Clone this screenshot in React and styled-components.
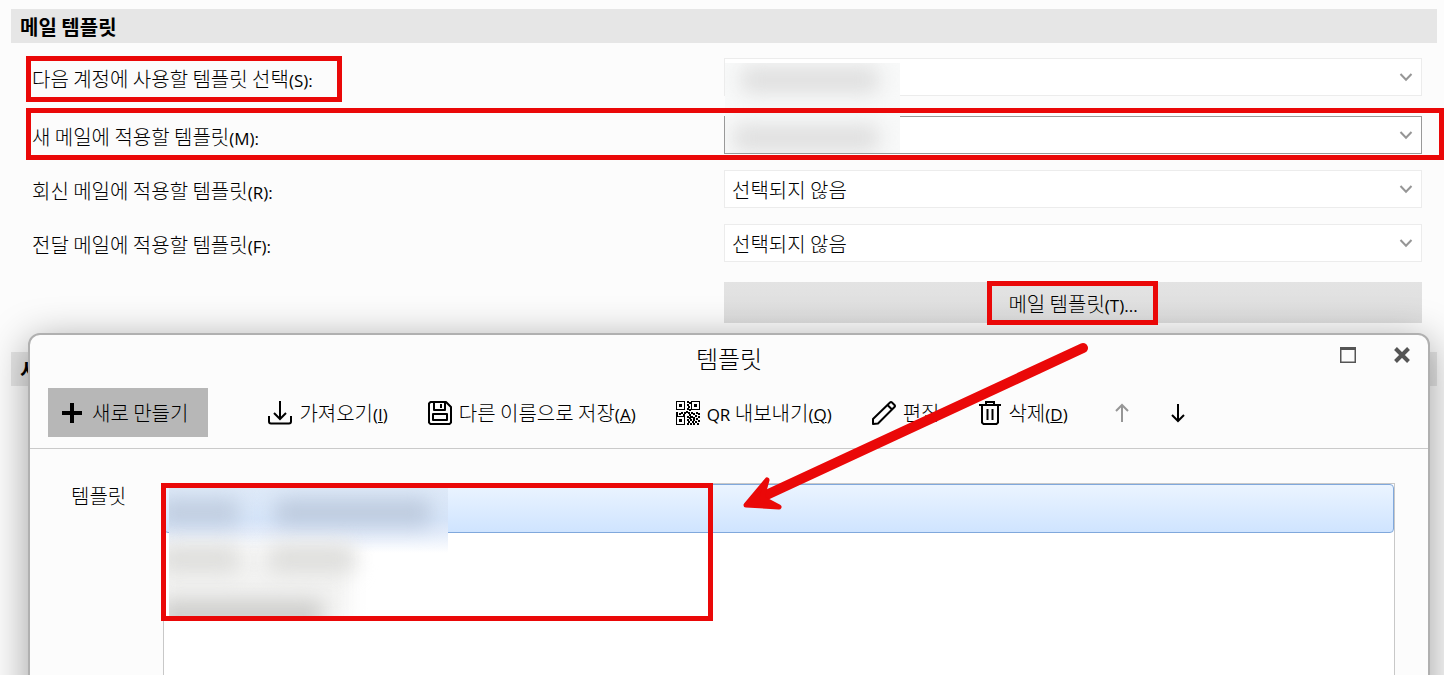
import React from "react";
import styled, { createGlobalStyle, css } from "styled-components";

const RED = "#ea0808";

const GlobalStyle = createGlobalStyle`
  *, *::before, *::after { box-sizing: border-box; }
  body {
    margin: 0;
    background: #fcfcfc;
    color: #000;
    font: 300 20px/24px "Noto Sans CJK KR", sans-serif;
  }
  button, select { font: inherit; color: inherit; }
`;

const Page = styled.main`
  position: relative;
  min-height: 100vh;
  padding: 9px 0 0;
  overflow: hidden;
`;

const SectionTitle = styled.h2`
  margin: 0 7px 0 11px;
  padding: 0 9px;
  height: 34px;
  background: #e6e6e6;
  font-size: 20px;
  font-weight: 700;
  line-height: 36px;
`;

const Settings = styled.div`
  display: flex;
  flex-direction: column;
  gap: 16px;
  padding: 15px 22px 29px 26px;
`;

const Row = styled.div`
  position: relative;
  display: grid;
  grid-template-columns: 1fr 1fr;
  align-items: center;
  margin-top: ${(p) => (p.$spaced ? "4px" : "0")};
`;

const RowLabel = styled.label`
  padding: 3px 0 0 6px;
`;

const Latin = styled.span`
  font-family: "Open Sans", sans-serif;
  font-size: 17px;
  font-weight: 400;
  line-height: 1;
`;

const SelectBox = styled.div`
  position: relative;
  svg {
    position: absolute;
    top: 14px;
    right: 9px;
    pointer-events: none;
  }
`;

const Select = styled.select`
  display: block;
  width: 100%;
  height: 38px;
  padding: 2px 32px 0 7px;
  border: 1px solid ${(p) => (p.$active ? "#999" : "#ececec")};
  border-radius: 0;
  background: #fff;
  appearance: none;
`;

const WideButton = styled.button`
  grid-column: 2;
  height: 41px;
  padding: 2px 0 0;
  border: 0;
  background: linear-gradient(#e3e3e3, #dedede);
`;

const Marked = styled.span`
  position: relative;
  display: inline-block;
`;

/* red annotation frame laid over a control */
const Frame = styled.span`
  position: absolute;
  z-index: ${(p) => (p.$top ? 3 : 2)};
  border: 5px solid ${RED};
  pointer-events: none;
  ${(p) => p.$at}
`;

const labelFrame = css`left: 0; top: -2px; width: 316px; height: 46px;`;
const rowFrame = css`left: 0; right: -22px; top: -8px; height: 52px;`;
const buttonFrame = css`left: -21px; right: -20px; top: -11px; height: 44px;`;
const listFrame = css`left: -3px; top: -1px; width: 552px; height: 138px;`;

const Redaction = styled.span`
  position: absolute;
  overflow: hidden;
  pointer-events: none;
  background: ${(p) => p.$bg || "#f8f9f9"};
  ${(p) => p.$at}
`;

const Smudge = styled.span`
  position: absolute;
  border-radius: 8px;
  filter: blur(10px);
  background: ${(p) => p.$color || "#dedede"};
  ${(p) => p.$at}
`;

const Dialog = styled.section`
  position: absolute;
  z-index: 1;
  top: 333px;
  bottom: -40px;
  left: 28px;
  right: 14px;
  display: flex;
  flex-direction: column;
  border: 2px solid #b0b0b0;
  border-radius: 12px;
  background: #fcfcfc;
  box-shadow: 0 8px 40px rgba(0, 0, 0, 0.38);
`;

const TitleBar = styled.header`
  display: grid;
  grid-template-columns: 1fr auto 1fr;
  align-items: start;
  height: 48px;
  padding: 0 18px;
`;

const DialogTitle = styled.h1`
  grid-column: 2;
  margin: 0;
  font-size: 24px;
  font-weight: 300;
  line-height: 46px;
`;

const WindowButtons = styled.div`
  display: flex;
  justify-content: flex-end;
  align-items: center;
  gap: 38px;
  height: 40px;
`;

const PlainButton = styled.button`
  display: flex;
  align-items: center;
  gap: 7px;
  padding: 0;
  border: 0;
  background: none;
  white-space: nowrap;
  svg { flex: none; }
  &:disabled { color: #969696; }
`;

const NewButton = styled(PlainButton)`
  gap: 10px;
  height: 49px;
  margin-right: 20px;
  padding: 0 20px 0 14px;
  background: #b7b7b7;
`;

const ArrowButtons = styled.div`
  display: flex;
  gap: 40px;
  padding-left: 6px;
`;

const Toolbar = styled.div`
  display: flex;
  align-items: center;
  gap: 40px;
  padding: 5px 18px 11px;
  border-bottom: 1px solid #cacaca;
`;

const Content = styled.div`
  display: grid;
  grid-template-columns: 92px 1fr;
  flex: 1;
  padding: 34px 33px 0 41px;
`;

const ListLabel = styled.span`
  line-height: 26px;
`;

const List = styled.ul`
  position: relative;
  margin: 0;
  padding: 0;
  border: 1px solid #c8c8c8;
  background: #fff;
  list-style: none;
`;

const Item = styled.li`
  height: 49px;
  border: 1px solid transparent;
  border-radius: 4px;
  &[aria-selected="true"] {
    border-color: #80a8dc;
    background: linear-gradient(#ebf4ff, #cfe4ff);
  }
`;

const Arrow = styled.svg`
  position: absolute;
  z-index: 4;
  top: 340px;
  left: calc(50% + 14px);
  pointer-events: none;
`;

const Icon = ({ w = 24, h = 24, children, ...rest }) => (
  <svg width={w} height={h} viewBox={`0 0 ${w} ${h}`} fill="none" stroke="currentColor" strokeWidth="2" aria-hidden="true" {...rest}>
    {children}
  </svg>
);

const Chevron = () => (
  <Icon w={14} h={10} stroke="#969696">
    <path d="M1.5 2 7 7.8 12.5 2" />
  </Icon>
);

const PlusIcon = () => (
  <Icon w={20} h={20} strokeWidth="4">
    <path d="M10 0v20M0 10h20" />
  </Icon>
);

const ImportIcon = () => (
  <Icon>
    <path d="M12 0v17.500M6 12l6 6 6-6M1 15v5.500a2 2 0 0 0 2 2h18a2 2 0 0 0 2-2V15" />
  </Icon>
);

const SaveIcon = () => (
  <Icon>
    <path d="M2.500 1H18l5 5v15.500L21.500 23h-19L1 21.500v-19zM6 1v8h11V1M13 3v4M5 19v-6h14v6z" strokeLinejoin="round" />
  </Icon>
);

const QR_DOTS = [
  [11, 0], [13, 1], [11, 3], [12, 5], [11, 7], [13, 8], [0, 11], [3, 12], [5, 11], [8, 11], [7, 13],
  [10, 10], [12, 11], [15, 11], [17, 12], [20, 11], [22, 12], [0, 13], [13, 13], [14, 15],
  [19, 14], [22, 15], [11, 15], [13, 16], [15, 15], [17, 16], [11, 18], [14, 18], [17, 18], [20, 17],
  [12, 20], [16, 20], [19, 20], [22, 19], [11, 22], [14, 22], [17, 22], [21, 22],
];

const QrIcon = () => (
  <Icon stroke="none" fill="currentColor" shapeRendering="crispEdges">
    {[[0, 0], [15, 0], [0, 15]].map(([x, y]) => (
      <path key={`${x}-${y}`} fillRule="evenodd" d={`M${x} ${y}h9v9h-9zm1 1v7h7v-7zm2 2h3v3h-3z`} />
    ))}
    {QR_DOTS.map(([x, y]) => (
      <rect key={`${x}-${y}`} x={x} y={y} width="2" height="2" />
    ))}
  </Icon>
);

const PencilIcon = () => (
  <Icon>
    <path d="M1 23v-5L18 1.500q1-1 2 0L22.500 4q1 1 0 2L6 22.500zM15.500 4l4.500 4.500" strokeLinejoin="round" />
  </Icon>
);

const TrashIcon = () => (
  <Icon w={22}>
    <path d="M0 4h22M7 4V1h8v3M3 4v17.500L4.500 23h13l1.500-1.500V4M8.500 8v11M13.500 8v11" />
  </Icon>
);

const UpIcon = () => (
  <Icon w={16} h={20}>
    <path d="M8 19V2M2 8l6-6 6 6" />
  </Icon>
);

const DownIcon = () => (
  <Icon w={16} h={20}>
    <path d="M8 1v17M2 12l6 6 6-6" />
  </Icon>
);

const MaximizeIcon = () => (
  <Icon w={16} h={16} stroke="#555" strokeWidth="1.500">
    <path d="M.75 0v15.250h14.500V0" />
    <path d="M0 1.500h16" strokeWidth="3" />
  </Icon>
);

const CloseIcon = () => (
  <Icon w={16} h={16} stroke="#555" strokeWidth="4">
    <path d="m1.500 1.500 13 13M14.500 1.500l-13 13" />
  </Icon>
);

const Accel = ({ k }) => (
  <Latin>(<u>{k}</u>)</Latin>
);

function SelectRow({ id, label, accel, value, active, spaced, frame, smudge }) {
  return (
    <Row $spaced={spaced}>
      <RowLabel htmlFor={id}>{label}<Latin>({accel}):</Latin></RowLabel>
      <SelectBox>
        <Select id={id} $active={active}>
          <option>{value}</option>
        </Select>
        <Chevron />
        {smudge}
      </SelectBox>
      {frame && <Frame $at={frame} />}
    </Row>
  );
}

export default function App() {
  return (
    <Page>
      <GlobalStyle />
      <SectionTitle>메일 템플릿</SectionTitle>
      <Settings>
        <SelectRow
          id="account" label="다음 계정에 사용할 템플릿 선택" accel="S" frame={labelFrame}
          smudge={
            <Redaction $at={css`left: 1px; top: 5px; width: 175px; height: 48px;`}>
              <Smudge $at={css`left: 16px; top: 4px; width: 138px; height: 26px;`} />
            </Redaction>
          }
        />
        <SelectRow
          id="new-mail" label="새 메일에 적용할 템플릿" accel="M" active spaced frame={rowFrame}
          smudge={
            <Redaction $at={css`left: 1px; top: -3px; width: 175px; height: 40px;`}>
              <Smudge $at={css`left: 8px; top: 12px; width: 146px; height: 26px;`} />
            </Redaction>
          }
        />
        <SelectRow id="reply" label="회신 메일에 적용할 템플릿" accel="R" value="선택되지 않음" />
        <SelectRow id="forward" label="전달 메일에 적용할 템플릿" accel="F" value="선택되지 않음" />
        <Row $spaced>
          <WideButton type="button">
            <Marked>
              메일 템플릿<Latin>(T)...</Latin>
              <Frame $at={buttonFrame} />
            </Marked>
          </WideButton>
        </Row>
      </Settings>
      <SectionTitle>서명</SectionTitle>

      <Dialog role="dialog" aria-labelledby="dialog-title">
        <TitleBar>
          <DialogTitle id="dialog-title">템플릿</DialogTitle>
          <WindowButtons>
            <PlainButton type="button" aria-label="최대화"><MaximizeIcon /></PlainButton>
            <PlainButton type="button" aria-label="닫기"><CloseIcon /></PlainButton>
          </WindowButtons>
        </TitleBar>
        <Toolbar role="toolbar">
          <NewButton type="button"><PlusIcon />새로 만들기</NewButton>
          <PlainButton type="button"><ImportIcon /><span>가져오기<Accel k="I" /></span></PlainButton>
          <PlainButton type="button"><SaveIcon /><span>다른 이름으로 저장<Accel k="A" /></span></PlainButton>
          <PlainButton type="button"><QrIcon /><span><Latin>QR </Latin>내보내기<Accel k="Q" /></span></PlainButton>
          <PlainButton type="button"><PencilIcon /><span>편집</span></PlainButton>
          <PlainButton type="button"><TrashIcon /><span>삭제<Accel k="D" /></span></PlainButton>
          <ArrowButtons>
            <PlainButton type="button" aria-label="위로" disabled><UpIcon /></PlainButton>
            <PlainButton type="button" aria-label="아래로"><DownIcon /></PlainButton>
          </ArrowButtons>
        </Toolbar>
        <Content>
          <ListLabel id="list-label">템플릿</ListLabel>
          <List role="listbox" aria-labelledby="list-label">
            <Item role="option" aria-selected="true" />
            <Item role="option" aria-selected="false" />
            <Item role="option" aria-selected="false" />
            <Redaction
              $bg="linear-gradient(#dfeaf8 0, #d6e5f9 32px, #e3ecfa 46px, rgba(255,255,255,0) 66px)"
              $at={css`left: 5px; top: 3px; width: 279px; height: 130px;`}
            >
              <Smudge $color="#f3f3f2" $at={css`left: -10px; top: 58px; width: 190px; height: 80px;`} />
              <Smudge $color="#c0cddf" $at={css`left: -10px; top: 12px; width: 80px; height: 27px;`} />
              <Smudge $color="#bdcadd" $at={css`left: 106px; top: 12px; width: 156px; height: 27px;`} />
              <Smudge $color="#dededc" $at={css`left: -10px; top: 58px; width: 80px; height: 28px;`} />
              <Smudge $color="#dededc" $at={css`left: 100px; top: 58px; width: 86px; height: 28px;`} />
              <Smudge $color="#cfcfcd" $at={css`left: -10px; top: 112px; width: 164px; height: 34px;`} />
            </Redaction>
            <Frame $at={listFrame} $top />
          </List>
        </Content>
      </Dialog>

      <Arrow width="360" height="180" viewBox="0 0 360 180" fill="none" stroke={RED} strokeLinecap="round" aria-hidden="true">
        <path d="M347 8 24 158" strokeWidth="10" />
        <path d="M10 165 31 140 26 158 43 167Z" fill={RED} strokeWidth="5" strokeLinejoin="round" />
      </Arrow>
    </Page>
  );
}
